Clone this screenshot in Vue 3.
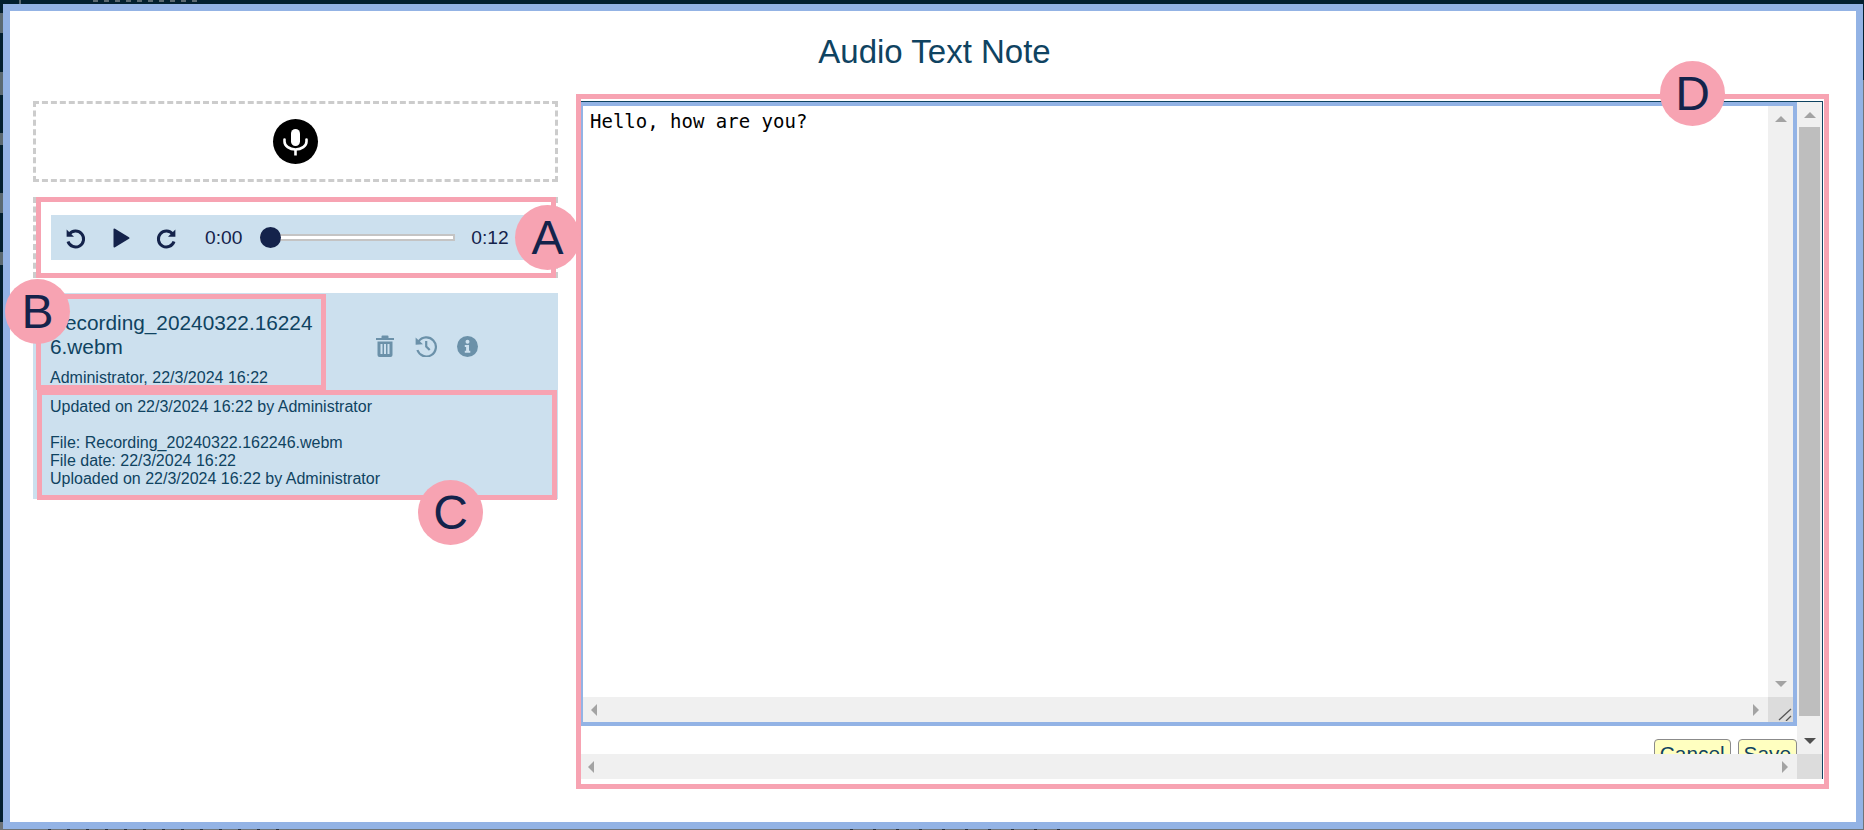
<script setup>
const detailLines = [
  'Updated on 22/3/2024 16:22 by Administrator',
  '',
  'File: Recording_20240322.162246.webm',
  'File date: 22/3/2024 16:22',
  'Uploaded on 22/3/2024 16:22 by Administrator',
]
</script>

<template>
  <div class="page">
    <div class="dialog">
      <h1 class="title">Audio Text Note</h1>
      <div class="columns">
        <section class="left-col">
          <div class="recorder">
            <button class="mic" aria-label="Record">
              <svg width="27" height="31" viewBox="0 0 27 31" fill="none">
                <rect x="9" y="3" width="9" height="17" rx="4.5" fill="#fff" />
                <path d="M2.500 13.500v2a11 8 0 0 0 22 0v-2" stroke="#fff" stroke-width="2.600" stroke-linecap="round" />
                <path d="M13.500 23.500v6" stroke="#fff" stroke-width="2.600" />
              </svg>
            </button>
          </div>

          <div class="player-wrap">
            <div class="player">
              <svg class="ctl first" width="24" height="24" viewBox="0 0 24 24" fill="none">
                <path d="M6.200 8.200A8 8 0 1 1 5 15.500" stroke="#14234b" stroke-width="3" />
                <path d="M3.600 3.400v7.400H11z" fill="#14234b" />
              </svg>
              <svg class="ctl play" width="18" height="20" viewBox="0 0 18 20">
                <path d="M1.500 1.500v17a1 1 0 0 0 1.500.8l14-8.500a1 1 0 0 0 0-1.600L3 .7a1 1 0 0 0-1.500.8z" fill="#14234b" />
              </svg>
              <svg class="ctl next" width="24" height="24" viewBox="0 0 24 24" fill="none">
                <path d="M17.800 8.200A8 8 0 1 0 19 15.500" stroke="#14234b" stroke-width="3" />
                <path d="M20.400 3.400v7.400H13z" fill="#14234b" />
              </svg>
              <span class="time start">0:00</span>
              <div class="track"><span class="thumb"></span></div>
              <span class="time end">0:12</span>
            </div>
          </div>

          <article class="item">
            <div class="item-head">
              <div class="item-name">
                <div class="name">Recording_20240322.162246.webm</div>
                <div class="meta">Administrator, 22/3/2024 16:22</div>
              </div>
              <div class="actions">
                <svg width="20" height="22" viewBox="0 0 20 22" fill="#6b91a9">
                  <path d="M1 3h5.500V1.600A1 1 0 0 1 7.500.6h5a1 1 0 0 1 1 1V3H19v2H1z" />
                  <path fill-rule="evenodd" d="M2.500 6.500h15V20a2 2 0 0 1-2 2h-11a2 2 0 0 1-2-2zM5.500 9v10H7.500V9zm3.500 0v10h2V9zm3.500 0v10h2V9z" />
                </svg>
                <svg width="22" height="22" viewBox="0 0 22 22" fill="none">
                  <path d="M3.600 6.500A9.500 9.500 0 1 1 2.400 15" stroke="#6b91a9" stroke-width="2.200" />
                  <path d="M.6 2.500 8 9.200.6 9.800z" fill="#6b91a9" />
                  <path d="M11.200 6v5.500l3.500 3.500" stroke="#6b91a9" stroke-width="2.200" />
                </svg>
                <svg width="21" height="21" viewBox="0 0 21 21">
                  <circle cx="10.500" cy="10.500" r="10.500" fill="#6b91a9" />
                  <circle cx="10.500" cy="5.800" r="2" fill="#cce0ee" />
                  <path d="M7.800 8.900h4.200v5.800h1.300v2H7.800v-2h1.300v-3.800H7.800z" fill="#cce0ee" />
                </svg>
              </div>
            </div>
            <div class="details">
              <div v-for="(line, i) in detailLines" :key="i" class="detail-line">{{ line }}</div>
            </div>
          </article>
        </section>

        <section class="right-col">
          <div class="viewport">
            <div class="editor-scroll">
              <div class="editor-view">
                <div class="textarea">
                  <div class="text-body">
                    <div class="text">Hello, how are you?</div>
                    <div class="sb-v">
                      <span class="arrow a-up a-light"></span>
                      <span class="arrow a-down a-light"></span>
                    </div>
                  </div>
                  <div class="sb-h-row">
                    <div class="sb-h inner">
                      <span class="arrow a-left a-light"></span>
                      <span class="arrow a-right a-light"></span>
                    </div>
                    <div class="corner grip">
                      <svg width="14" height="14" viewBox="0 0 14 14" fill="none" stroke="#555" stroke-width="1.300">
                        <path d="M1 13 13 2M8 14l5-5" />
                      </svg>
                    </div>
                  </div>
                </div>
                <div class="buttons">
                  <button class="btn">Cancel</button>
                  <button class="btn">Save</button>
                </div>
              </div>
              <div class="outer-v">
                <span class="arrow a-up a-light"></span>
                <div class="outer-thumb"></div>
                <span class="arrow a-down a-dark"></span>
              </div>
            </div>
            <div class="sb-h-row">
              <div class="sb-h outer">
                <span class="arrow a-left a-light"></span>
                <span class="arrow a-right a-light"></span>
              </div>
              <div class="corner"></div>
            </div>
          </div>
        </section>
      </div>

      <span class="pin pin-a">A</span>
      <span class="pin pin-b">B</span>
      <span class="pin pin-c">C</span>
      <span class="pin pin-d">D</span>
    </div>
  </div>
</template>

<style>
html, body { margin: 0; background: #03202f; }
</style>

<style scoped>
.page {
  position: relative;
  width: 1864px;
  height: 830px;
  box-sizing: border-box;
  padding: 4px 1px 1px 3px;
  /* Slivers of the page behind the dialog, seen only along its edges */
  background:
    repeating-linear-gradient(90deg, #5b6a72 0 5px, transparent 5px 11px) 93px 0 / 104px 2px no-repeat,
    linear-gradient(#5b6a72, #5b6a72) 19px 0 / 2px 4px no-repeat,
    repeating-linear-gradient(90deg, #2a3038 0 3px, transparent 3px 19px) 48px 829px / 237px 1px no-repeat,
    repeating-linear-gradient(90deg, #2a3038 0 3px, transparent 3px 23px) 850px 829px / 220px 1px no-repeat,
    linear-gradient(#03202f 0 822px, #6e7478 822px);
  overflow: hidden;
  font-family: "Liberation Sans", Arial, sans-serif;
}
.page::before {
  content: "";
  position: absolute;
  left: 0;
  top: 0;
  width: 3px;
  height: 300px;
  background: linear-gradient(
    #03202f 0 13px, #5b6a72 13px 33px,
    #03202f 33px 72px, #5b6a72 72px 95px,
    #03202f 95px 133px, #5b6a72 133px 145px,
    #03202f 145px 193px, #5b6a72 193px 213px,
    #03202f 213px 252px, #5b6a72 252px 265px,
    #03202f 265px
  );
}
.page::after {
  content: "";
  position: absolute;
  right: 0;
  top: 80px;
  bottom: 0;
  width: 1px;
  background: #6e7478;
}
.dialog {
  position: relative;
  box-sizing: border-box;
  height: 825px;
  border: 7px solid #93b3e5;
  background: #fff;
  display: flex;
  flex-direction: column;
}
.title {
  margin: 0;
  height: 83px;
  padding: 23px 0 0 3px;
  box-sizing: border-box;
  font-size: 33px;
  line-height: 36px;
  font-weight: 400;
  text-align: center;
  color: #0f4361;
}
.columns {
  display: flex;
  align-items: flex-start;
  padding-left: 23px;
}
.left-col {
  width: 525px;
  margin-top: 7px;
  flex: none;
}
.recorder {
  box-sizing: border-box;
  height: 81px;
  border: 3px dashed #cccccc;
  display: flex;
  align-items: center;
  justify-content: center;
}
.mic {
  width: 45px;
  height: 45px;
  padding: 0;
  border: 0;
  border-radius: 50%;
  background: #000;
  display: flex;
  align-items: center;
  justify-content: center;
}
.player-wrap {
  position: relative;
  box-sizing: border-box;
  height: 81px;
  margin-top: 15px;
  padding: 15px 8px 15px 15px;
  border: 3px dashed #cccccc;
}
.player-wrap::after {
  content: "";
  position: absolute;
  left: 0;
  right: -1px;
  top: -3px;
  bottom: -3px;
  border: 5px solid #f7a3b2;
  pointer-events: none;
}
.player {
  height: 45px;
  background: #cce0ee;
  display: flex;
  align-items: center;
  color: #14234b;
}
.ctl { flex: none; display: block; }
.ctl.first { margin-left: 12px; }
.ctl.play { margin-left: 25px; }
.ctl.next { margin-left: 25px; }
.time {
  flex: none;
  font-size: 19.200px;
  line-height: 22px;
}
.start { margin-left: 26px; }
.end { margin-left: 16px; }
.track {
  position: relative;
  width: 195px;
  height: 7px;
  margin-left: 18px;
  box-sizing: border-box;
  border: 2px solid #c4c4c4;
  background: #fff;
  flex: none;
}
.thumb {
  position: absolute;
  left: -2px;
  top: -9px;
  width: 21px;
  height: 21px;
  border-radius: 50%;
  background: #14234b;
}
.item {
  box-sizing: border-box;
  height: 206px;
  margin-top: 15px;
  background: #cce0ee;
}
.item-head {
  display: flex;
  height: 97px;
}
.item-name {
  box-sizing: border-box;
  width: 290px;
  margin: 1px 0 0 3px;
  padding: 12px 5px 0 9px;
  border: 5px solid #f7a3b2;
  color: #0f4361;
  overflow: hidden;
}
.name {
  font-size: 20.800px;
  line-height: 24px;
  word-break: break-all;
}
.meta {
  margin-top: 10px;
  font-size: 16px;
  line-height: 18px;
  white-space: nowrap;
}
.actions {
  flex: 1;
  display: flex;
  align-items: center;
  gap: 20px;
  padding: 9px 0 0 49px;
}
.details {
  box-sizing: border-box;
  height: 110px;
  margin-left: 4px;
  margin-right: 1px;
  padding: 3px 0 0 8px;
  border: 5px solid #f7a3b2;
  color: #0f4361;
  font-size: 16px;
  line-height: 18px;
}
.detail-line { min-height: 18px; white-space: nowrap; }

.right-col {
  box-sizing: border-box;
  width: 1253px;
  height: 695px;
  margin-left: 18px;
  padding: 2px 1px 5px 0;
  border: 5px solid #f7a3b2;
  flex: none;
  display: flex;
}
.viewport {
  flex: 1;
  min-width: 0;
  display: flex;
  flex-direction: column;
  border-top: 1px solid #0f4361;
  border-right: 1px solid #0f4361;
}
.editor-scroll {
  flex: 1;
  min-height: 0;
  display: flex;
  overflow: hidden;
}
.editor-view {
  flex: 1;
  min-width: 0;
}
.textarea {
  box-sizing: border-box;
  height: 624px;
  border: 4px solid #93b3e5;
  border-left-width: 2px;
  display: flex;
  flex-direction: column;
}
.text-body { flex: 1; display: flex; min-height: 0; }
.text {
  flex: 1;
  padding: 4px 0 0 7px;
  font-family: "DejaVu Sans Mono", monospace;
  font-size: 19px;
  line-height: 22px;
  color: #000;
}
.sb-v {
  width: 25px;
  background: #f0f0f0;
  display: flex;
  flex-direction: column;
  justify-content: space-between;
  align-items: center;
  padding: 10px 0;
  box-sizing: border-box;
}
.sb-h-row { display: flex; height: 25px; flex: none; }
.sb-h {
  flex: 1;
  background: #f0f0f0;
  display: flex;
  align-items: center;
  justify-content: space-between;
}
.sb-h.inner { padding: 0 9px 0 8px; }
.sb-h.outer { padding: 0 9px 0 7px; }
.corner { width: 25px; background: #dcdcdc; flex: none; position: relative; }
.grip svg { position: absolute; right: 1px; bottom: 1px; }
.arrow { display: block; width: 0; height: 0; border-style: solid; border-color: transparent; }
.a-up { border-width: 0 6px 6px; }
.a-down { border-width: 6px 6px 0; }
.a-left { border-width: 6px 6px 6px 0; }
.a-right { border-width: 6px 0 6px 6px; }
.a-up.a-light { border-bottom-color: #a3a3a3; }
.a-down.a-light { border-top-color: #a3a3a3; }
.a-down.a-dark { border-top-color: #505050; }
.a-left.a-light { border-right-color: #a3a3a3; }
.a-right.a-light { border-left-color: #a3a3a3; }
.buttons {
  display: flex;
  justify-content: flex-end;
  gap: 7px;
  padding-top: 13px;
}
.btn {
  flex: none;
  padding: 0 5px;
  border: 1px solid #8b8b8b;
  border-radius: 4px;
  background: #ffffc0;
  color: #0f4361;
  font-family: inherit;
  font-size: 20.800px;
  line-height: 28px;
}
.outer-v {
  width: 25px;
  flex: none;
  background: #f0f0f0;
  display: flex;
  flex-direction: column;
  align-items: center;
  box-sizing: border-box;
  padding-top: 10px;
}
.outer-thumb {
  width: 21px;
  height: 589px;
  margin-top: 9px;
  flex: none;
  background: #bebebe;
}
.outer-v .a-down { margin-top: 22px; }

.pin {
  position: absolute;
  width: 65px;
  height: 65px;
  border-radius: 50%;
  background: #f7a3b2;
  color: #14234b;
  font-size: 48px;
  line-height: 65px;
  text-align: center;
}
.pin-a { left: 505px; top: 194px; }
.pin-b { left: -5px; top: 268px; }
.pin-c { left: 408px; top: 469px; }
.pin-d { left: 1650px; top: 50px; }
</style>
